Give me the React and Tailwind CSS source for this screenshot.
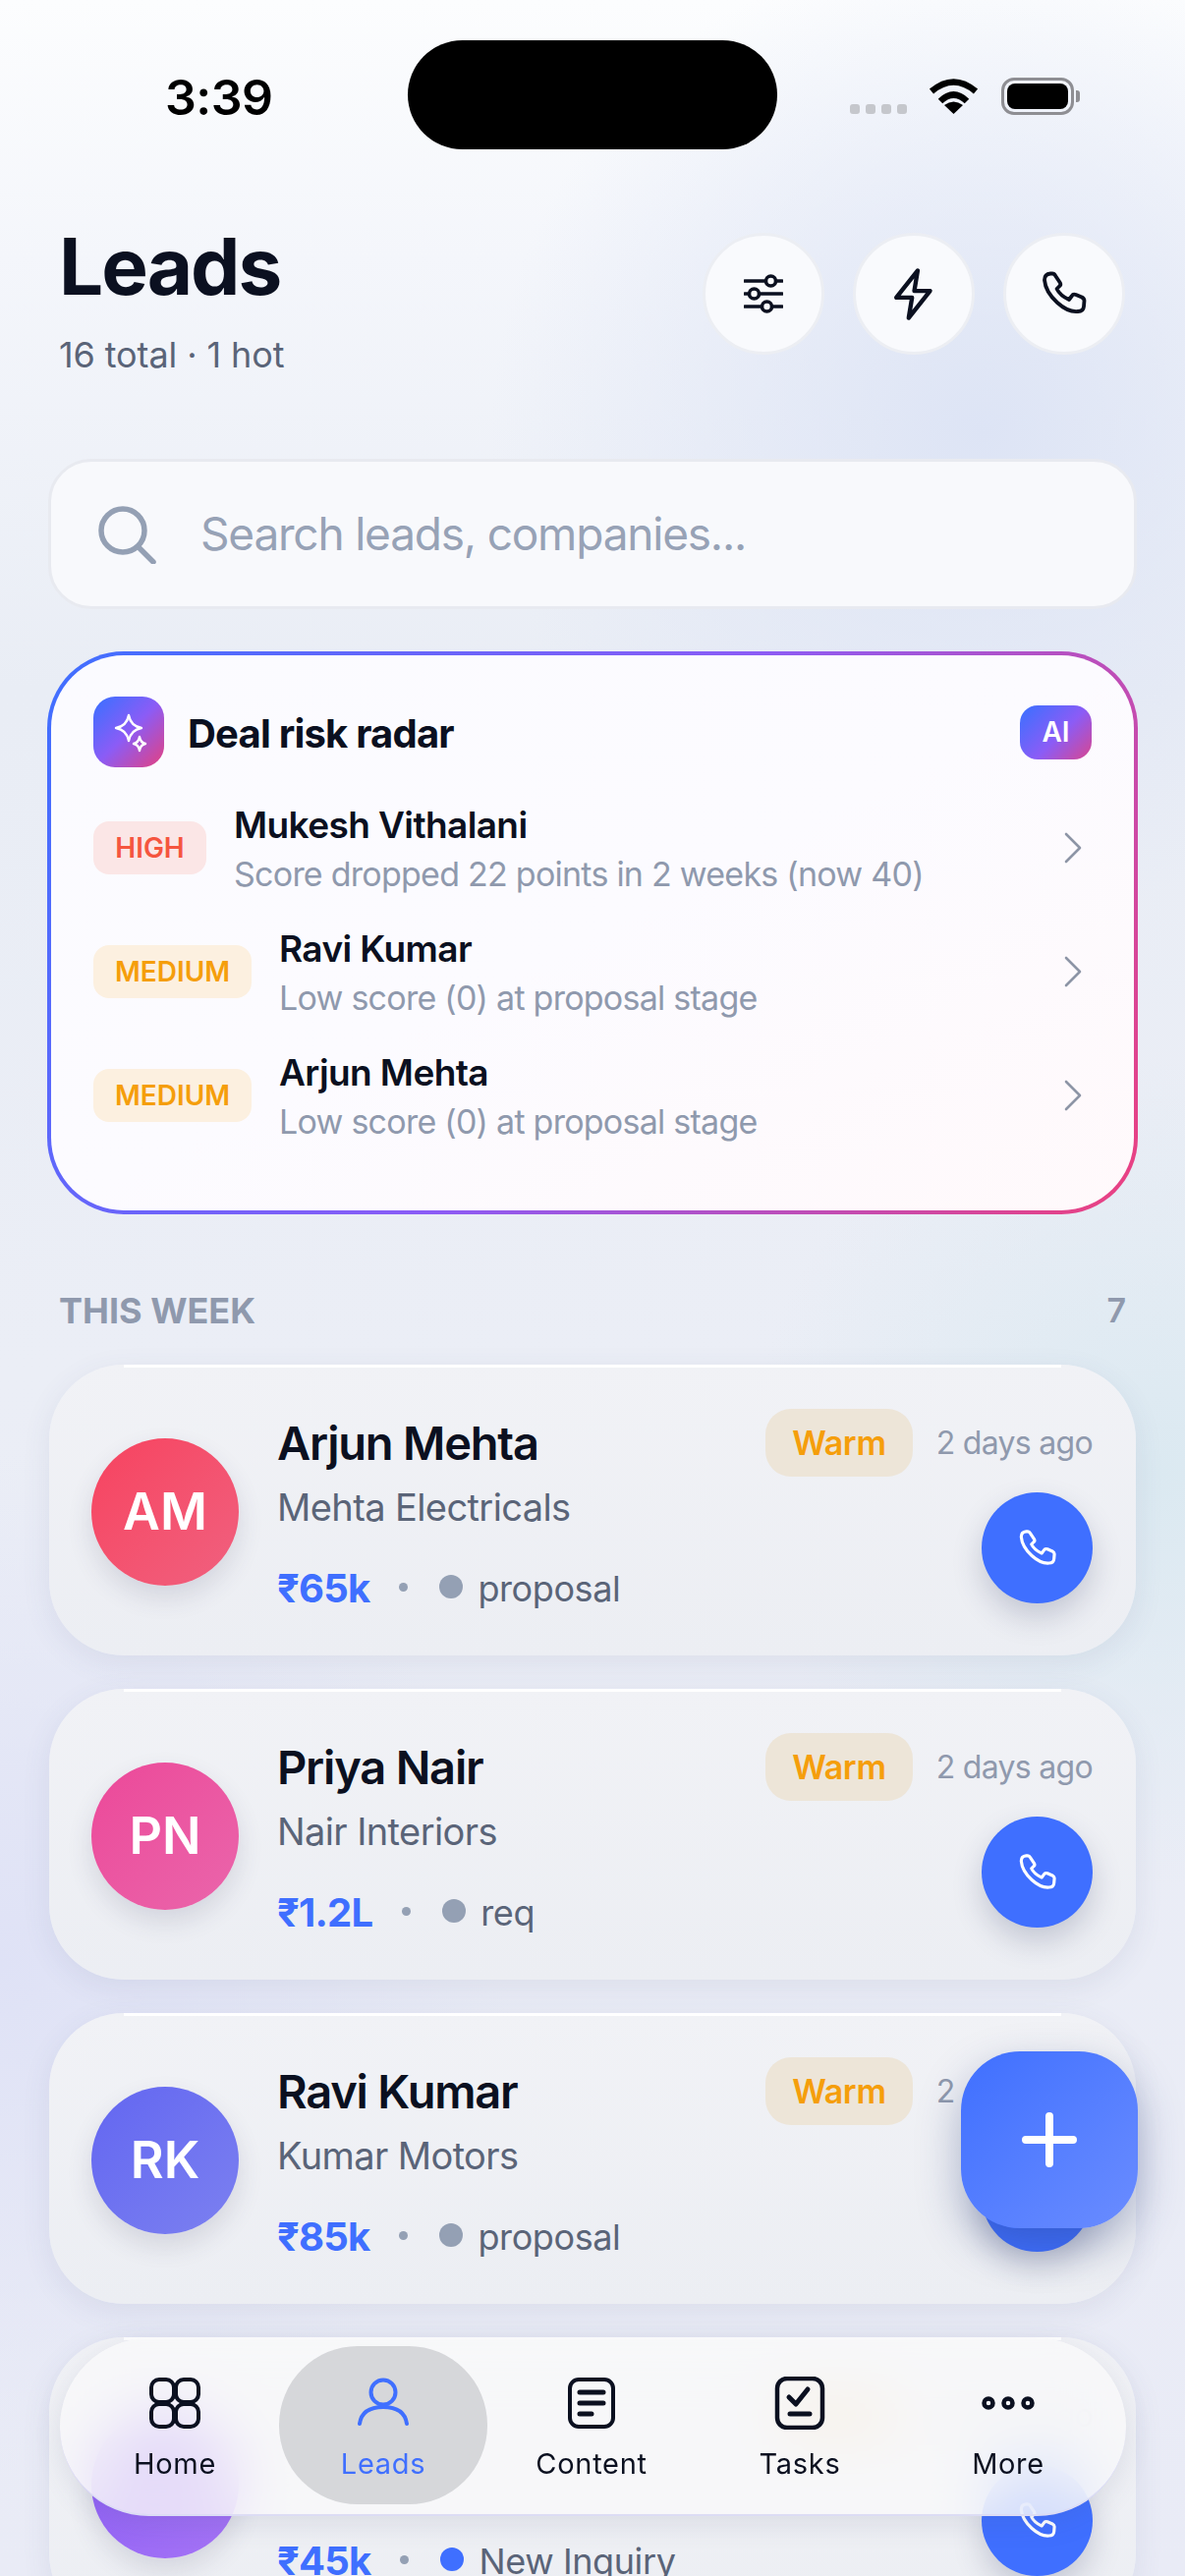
import React from "react";

const risks = [
  { level: "HIGH", name: "Mukesh Vithalani", note: "Score dropped 22 points in 2 weeks (now 40)" },
  { level: "MEDIUM", name: "Ravi Kumar", note: "Low score (0) at proposal stage" },
  { level: "MEDIUM", name: "Arjun Mehta", note: "Low score (0) at proposal stage" },
];

// the fourth card's name and initials sit under the nav in the picture
const leads = [
  { id: 1, initials: "AM", avatar: "bg-gradient-to-br from-[#f7425f] to-[#f0607f]", name: "Arjun Mehta", company: "Mehta Electricals", amount: "₹65k", stage: "proposal" },
  { id: 2, initials: "PN", avatar: "bg-gradient-to-br from-[#ec4899] to-[#ea65ab]", name: "Priya Nair", company: "Nair Interiors", amount: "₹1.2L", stage: "req" },
  { id: 3, initials: "RK", avatar: "bg-gradient-to-br from-[#6366f1] to-[#7c80f0]", name: "Ravi Kumar", company: "Kumar Motors", amount: "₹85k", stage: "proposal" },
  { id: 4, initials: "", avatar: "bg-gradient-to-br from-[#8b5cf6] to-[#a674f5]", name: "", company: "", amount: "₹45k", stage: "New Inquiry", fresh: true },
];

function PhoneIcon({ className }) {
  return (
    <svg viewBox="0 0 48 48" fill="none" stroke="currentColor" strokeWidth="3.8" strokeLinejoin="round" className={className}>
      <path d="M4 10Q4 4 10 3.5L12 3.5Q14 3.5 15 5.5L20 13Q21 15 19 16.5L16.5 19Q20 26 29 30L32 26Q33 24 36 25L42 27.5Q44.5 29 44.5 31L44 37Q43.5 42 38 42Q28 43 17 33Q5 22 4 10Z" />
    </svg>
  );
}

function SlidersIcon() {
  return (
    <svg viewBox="0 0 40 40" fill="none" stroke="#0b1020" strokeWidth="3.6" strokeLinecap="round" className="h-[40px] w-[40px]">
      <path d="M1 7H22M33 7H39M1 20H5M16 20H39M1 33H18M29 33H39" />
      <circle cx="27.5" cy="7" r="5" />
      <circle cx="10.5" cy="20" r="5" />
      <circle cx="23.5" cy="33" r="5" />
    </svg>
  );
}

function BoltIcon() {
  return (
    <svg viewBox="0 0 24 24" fill="none" stroke="#0b1020" strokeWidth="1.9" strokeLinejoin="round" className="h-[55px] w-[55px]">
      <path d="M13.5 1.5L4 13.5H11L9.5 22.5L19 10.5H12Z" />
    </svg>
  );
}

function SearchIcon() {
  return (
    <svg viewBox="0 0 60 60" fill="none" stroke="#94a0b4" strokeWidth="5.5" strokeLinecap="round" className="h-[60px] w-[60px]">
      <circle cx="26" cy="26" r="22" />
      <path d="M42 43L57 58" />
    </svg>
  );
}

function Chevron() {
  return (
    <svg viewBox="0 0 18 32" fill="none" stroke="#8d95a6" strokeWidth="2.6" strokeLinecap="round" strokeLinejoin="round" className="mr-[10px] h-[32px] w-[18px]">
      <path d="M2 2L16 16L2 30" />
    </svg>
  );
}

function StatusIcons() {
  return (
    <div className="flex w-[235px] items-start pt-[79px]">
      <div className="mt-[27px] flex gap-[6px]">
        {[0, 1, 2, 3].map((d) => (
          <span key={d} className="h-[10px] w-[10px] rounded-[3px] bg-[#c5c7cc]" />
        ))}
      </div>
      <svg viewBox="0 0 51 38" className="ml-[22px] h-[38px] w-[51px]">
        <path d="M3 14Q25.5 -5 48 14" fill="none" stroke="#000" strokeWidth="6.5" />
        <path d="M12 24Q25.5 11 39 24" fill="none" stroke="#000" strokeWidth="6.5" />
        <path d="M25.5 37L16 28Q25.5 21 35 28Z" fill="#000" />
      </svg>
      <div className="ml-[23px] flex items-center">
        <div className="h-[38px] w-[74px] rounded-[13px] border-[3px] border-[#8e8e93] p-[3px]">
          <div className="h-full w-full rounded-[8px] bg-black" />
        </div>
        <div className="ml-[2px] h-[12px] w-[4px] rounded-r-[3px] bg-[#8e8e93]" />
      </div>
    </div>
  );
}

function RiskRow({ level, name, note }) {
  const high = level === "HIGH";
  return (
    <div className="flex h-[126px] items-center">
      <span
        className={
          high
            ? "w-[115px] rounded-[16px] bg-[#fbe6e6] py-[10px] text-center text-[28px] leading-[34px] font-semibold text-[#f5553f]"
            : "w-[161px] rounded-[16px] bg-[#fcf0e0] py-[10px] text-center text-[28px] leading-[34px] font-semibold text-[#f59e0b]"
        }
      >
        {level}
      </span>
      <div className="ml-[28px] min-w-0 flex-1 pt-[3px]">
        <p className="text-[37px] leading-[50px] font-semibold tracking-[-0.6px] text-[#0b1020]">{name}</p>
        <p className="text-[34px] leading-[50px] tracking-[-0.75px] text-[#8f99ad]">{note}</p>
      </div>
      <Chevron />
    </div>
  );
}

function LeadCard({ lead }) {
  return (
    <div className="relative flex h-[296px] shrink-0 items-start rounded-[76px] bg-gradient-to-b from-[#f1f2f6] to-[#eceef3] pr-[44px] pl-[43px] shadow-[0_8px_30px_rgba(70,80,120,0.09)]">
      <div className="absolute top-0 right-[76px] left-[76px] h-[3px] bg-white" />
      <div className={`mt-[75px] flex h-[150px] w-[150px] shrink-0 items-center justify-center rounded-full text-[52px] font-semibold text-white shadow-[0_12px_26px_rgba(60,60,90,0.14)] ${lead.avatar}`}>
        {lead.initials}
      </div>
      <div className="ml-[39px] min-w-0 flex-1 pt-[48px]">
        <p className="h-[64px] text-[47px] leading-[64px] font-semibold tracking-[-1.2px] text-[#0b1020]">{lead.name}</p>
        <p className="h-[66px] text-[38px] leading-[66px] tracking-[-0.6px] text-[#5a6478]">{lead.company}</p>
        <div className="mt-[25px] flex h-[50px] items-center">
          <span className="text-[40px] font-bold tracking-[-0.8px] text-[#3f6fff]">{lead.amount}</span>
          <span className="-mt-[4px] ml-[30px] h-[9px] w-[9px] rounded-full bg-[#94a0b4]" />
          <span className={lead.fresh ? "-mt-[4px] ml-[32px] h-[24px] w-[24px] rounded-full bg-[#3f6fff]" : "-mt-[4px] ml-[32px] h-[24px] w-[24px] rounded-full bg-[#94a0b4]"} />
          <span className="ml-[15px] text-[36px] tracking-[-0.4px] text-[#5a6478]">{lead.stage}</span>
        </div>
      </div>
      <div className="flex flex-col items-end pt-[45px]">
        <div className="flex items-center gap-[24px]">
          <span className="rounded-[26px] bg-[#ede5d8] px-[27px] py-[13px] text-[34px] leading-[43px] font-semibold tracking-[-0.3px] text-[#f59e0b]">Warm</span>
          <span className="text-[32px] tracking-[-0.7px] text-[#8f99ad]">2 days ago</span>
        </div>
        <button className="mt-[16px] flex h-[113px] w-[113px] items-center justify-center rounded-full bg-[#3f6fff] text-white shadow-[0_14px_30px_rgba(50,60,100,0.22)]">
          <PhoneIcon className="h-[40px] w-[40px]" />
        </button>
      </div>
    </div>
  );
}

function NavItem({ label, active, children }) {
  return (
    <div className={active ? "flex w-[212px] flex-col items-center rounded-[80px] bg-[#d6d7da] pt-[31px] text-[#3f6fff]" : "flex w-[212px] flex-col items-center pt-[31px] text-[#0b1020]"}>
      <div className="flex h-[54px] items-center justify-center">{children}</div>
      <span className="mt-[15px] text-[29px] leading-[40px] tracking-[0.7px]">{label}</span>
    </div>
  );
}

export default function App() {
  return (
    <div className="relative h-[2622px] w-[1206px] overflow-hidden bg-[radial-gradient(circle_at_1000px_440px,#dde4f5_0,transparent_500px),radial-gradient(circle_at_1180px_1500px,#dbe9f1_0,transparent_420px),radial-gradient(circle_at_0px_2000px,#dfe2f6_0,transparent_520px),linear-gradient(180deg,#fcfdfe_0,#f4f6fb_260px,#e9edf5_700px,#ebeef6_1400px,#e9ebf6_2622px)] font-['Inter',sans-serif]">
      <div className="flex h-[152px] items-start justify-between pr-[106px] pl-[168px]">
        <span className="pt-[66px] text-[50px] leading-[66px] font-semibold tracking-[-0.5px] text-black">3:39</span>
        <div className="mt-[41px] ml-[63px] h-[111px] w-[376px] rounded-[56px] bg-black" />
        <StatusIcons />
      </div>

      <div className="px-[50px]">
        <div className="mt-[85px] flex h-[122px] items-start justify-between pr-[11px] pl-[10px]">
          <div>
            <h1 className="-mt-[11px] text-[80px] leading-[90px] font-bold tracking-[-2px] text-[#0b1020]">Leads</h1>
            <p className="mt-[22px] text-[36px] leading-[46px] tracking-[-0.1px] text-[#5a6478]">16 total · 1 hot</p>
          </div>
          <div className="flex gap-[29px]">
            {[<SlidersIcon key="s" />, <BoltIcon key="b" />, <PhoneIcon key="p" className="h-[48px] w-[48px] text-[#0b1020]" />].map((icon, i) => (
              <button key={i} className="flex h-[124px] w-[124px] shrink-0 items-center justify-center rounded-full border-[3px] border-[#eceef3] bg-[#f9fafd]">
                {icon}
              </button>
            ))}
          </div>
        </div>

        <div className="-mx-[1px] mt-[108px] flex h-[153px] items-center rounded-[44px] border-[3px] border-[#e8eaf0] bg-[#f8f9fc] pl-[47px]">
          <SearchIcon />
          <span className="ml-[45px] text-[46px] tracking-[-1.2px] text-[#97a2b6]">Search leads, companies...</span>
        </div>

        <div className="-mx-[2px] mt-[43px] h-[573px] rounded-[78px] bg-[linear-gradient(120deg,#3f6fff_0%,#8b5cf6_50%,#ec407f_100%)] p-[4px]">
          <div className="h-full rounded-[74px] bg-gradient-to-br from-[#fbfbff] via-[#fcfbff] to-[#fff9fb] pt-[42px] pr-[43px] pl-[43px]">
            <div className="flex h-[72px] items-center">
              <div className="flex h-[72px] w-[72px] items-center justify-center rounded-[22px] bg-[linear-gradient(135deg,#3f6fff_5%,#8b5cf6_50%,#e5407f_100%)]">
                <svg viewBox="0 0 72 72" fill="none" stroke="#fff" strokeWidth="2.4" strokeLinejoin="round" className="h-[72px] w-[72px]">
                  <path d="M36 19Q38 30 49 32Q38 34 36 45Q34 34 23 32Q34 30 36 19Z" />
                  <path d="M47 41Q48 47 53 48Q48 49 47 55Q46 49 41 48Q46 47 47 41Z" />
                </svg>
              </div>
              <h2 className="ml-[24px] flex-1 pt-[3px] text-[40px] font-bold tracking-[-0.8px] text-[#0b1020]">Deal risk radar</h2>
              <span className="flex h-[55px] w-[73px] items-center justify-center rounded-[18px] bg-[linear-gradient(135deg,#3f6fff_5%,#8b5cf6_55%,#d9468f_100%)] text-[28px] font-semibold text-white">AI</span>
            </div>
            <div className="mt-[19px]">
              {risks.map((r) => (
                <RiskRow key={r.name} {...r} />
              ))}
            </div>
          </div>
        </div>

        <div className="mt-[74px] flex items-center justify-between px-[10px]">
          <span className="text-[36px] leading-[48px] font-bold text-[#8f99ad]">THIS WEEK</span>
          <span className="text-[34px] leading-[48px] font-semibold text-[#8f99ad]">7</span>
        </div>

        <div className="mt-[31px] flex flex-col gap-[34px]">
          {leads.map((lead) => (
            <LeadCard key={lead.id} lead={lead} />
          ))}
        </div>
      </div>

      <button className="absolute top-[2088px] left-[978px] flex h-[180px] w-[180px] items-center justify-center rounded-[60px] bg-gradient-to-br from-[#3f6fff] to-[#6a8cff] text-white shadow-[0_18px_44px_rgba(40,60,120,0.35)]">
        <svg viewBox="0 0 56 56" fill="none" stroke="#fff" strokeWidth="8" strokeLinecap="round" className="h-[56px] w-[56px]">
          <path d="M28 4V52M4 28H52" />
        </svg>
      </button>

      <nav className="absolute top-[2380px] left-[61px] flex h-[181px] w-[1085px] rounded-[92px] border-b-[2px] border-[#dcdcf4] bg-[#f9f9fa]/80 px-[11px] pt-[8px] pb-[10px] shadow-[0_8px_28px_rgba(70,80,120,0.12)] backdrop-blur-[30px]">
        <NavItem label="Home">
          <svg viewBox="0 0 52 52" fill="none" stroke="currentColor" strokeWidth="4" className="h-[52px] w-[52px]">
            <rect x="2" y="2" width="23" height="23" rx="8" />
            <rect x="27" y="2" width="23" height="23" rx="8" />
            <rect x="2" y="27" width="23" height="23" rx="8" />
            <rect x="27" y="27" width="23" height="23" rx="8" />
          </svg>
        </NavItem>
        <NavItem label="Leads" active>
          <svg viewBox="0 0 52 52" fill="none" stroke="currentColor" strokeWidth="4" strokeLinecap="round" className="h-[52px] w-[52px]">
            <circle cx="26" cy="15" r="12.5" />
            <path d="M2 47C4 33 16 30 26 30S48 33 50 47" />
          </svg>
        </NavItem>
        <NavItem label="Content">
          <svg viewBox="0 0 52 52" fill="none" stroke="currentColor" strokeLinecap="round" className="h-[52px] w-[52px]">
            <rect x="4" y="2" width="44" height="48" rx="9" strokeWidth="4" />
            <path d="M14 15H38M14 26H38M14 37H26" strokeWidth="5" />
          </svg>
        </NavItem>
        <NavItem label="Tasks">
          <svg viewBox="0 0 52 54" fill="none" stroke="currentColor" strokeLinecap="round" strokeLinejoin="round" className="h-[54px] w-[52px]">
            <rect x="3" y="2" width="46" height="50" rx="10" strokeWidth="4.5" />
            <path d="M15 21L22 28L34 13M16 38H36" strokeWidth="5" />
          </svg>
        </NavItem>
        <NavItem label="More">
          <svg viewBox="0 0 54 14" fill="none" stroke="currentColor" strokeWidth="4.5" className="h-[14px] w-[54px]">
            <circle cx="7" cy="7" r="4.5" />
            <circle cx="27" cy="7" r="4.5" />
            <circle cx="47" cy="7" r="4.5" />
          </svg>
        </NavItem>
      </nav>
    </div>
  );
}
